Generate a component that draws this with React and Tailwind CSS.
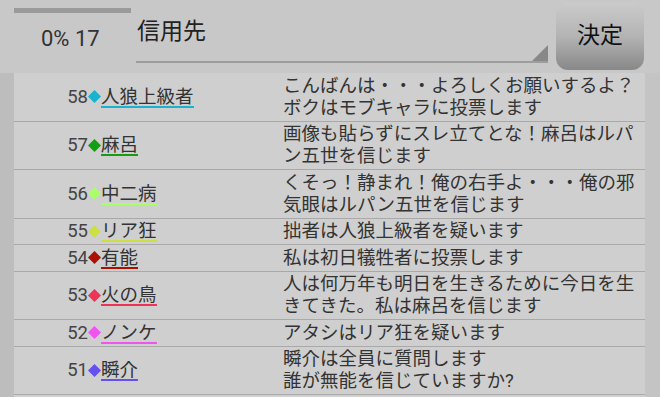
const rows = [
  { no: 58, name: '人狼上級者', color: '#1ab2cc', text: 'こんばんは・・・よろしくお願いするよ？ボクはモブキャラに投票します' },
  { no: 57, name: '麻呂', color: '#12a012', text: '画像も貼らずにスレ立てとな！麻呂はルパン五世を信じます' },
  { no: 56, name: '中二病', color: '#a8ff66', text: 'くそっ！静まれ！俺の右手よ・・・俺の邪気眼はルパン五世を信じます' },
  { no: 55, name: 'リア狂', color: '#cce044', text: '拙者は人狼上級者を疑います' },
  { no: 54, name: '有能', color: '#aa1100', text: '私は初日犠牲者に投票します' },
  { no: 53, name: '火の鳥', color: '#ee3358', text: '人は何万年も明日を生きるために今日を生きてきた。私は麻呂を信じます' },
  { no: 52, name: 'ノンケ', color: '#ee55ee', text: 'アタシはリア狂を疑います' },
  { no: 51, name: '瞬介', color: '#6650ee', text: '瞬介は全員に質問します\n誰が無能を信じていますか?' },
]

const font = { fontFamily: 'Roboto, "Noto Sans CJK JP", sans-serif' }

function Row({ no, name, color, text }) {
  return (
    <div className="flex items-center border-b border-[#a9a9a9] pb-[2px] pt-[1.5px]">
      <div className="flex w-[269px] shrink-0 items-center">
        <span className="w-[74px] text-right text-[18.5px] leading-[22px] text-[#444]">{no}</span>
        <svg width="13" height="13" viewBox="0 0 12 12" className="shrink-0">
          <polygon points="6,0 12,6 6,12 0,6" fill={color} />
        </svg>
        <span
          className="mt-[2px] border-b-2 text-[18.5px] leading-[18px] text-[#333]"
          style={{ borderColor: color }}
        >
          {name}
        </span>
      </div>
      <div className="min-h-[22px] w-[360px] whitespace-pre-line text-[18.5px] leading-[22px] text-[#333]">{text}</div>
    </div>
  )
}

export default function App() {
  return (
    <div className="flex h-[397px] w-[660px] flex-col overflow-hidden bg-[#c8c8c8]" style={font}>
      <div className="flex h-[73px] shrink-0">
        <div className="ml-[14px] flex w-[117px] flex-col pt-[8px]">
          <div className="h-[5px] bg-[#9a9a9a]" />
          <div className="mt-[13px] pl-[27px] text-[22px] leading-[26px] text-[#333]">0% 17</div>
        </div>
        <div className="relative ml-[5px] mt-[14px] h-[49px] w-[412px] border-b-2 border-[#9d9d9d]">
          <span className="absolute left-[1px] top-[4px] text-[23px] leading-[28px] text-[#222]">信用先</span>
          <svg width="16" height="16" viewBox="0 0 16 16" className="absolute bottom-0 right-0">
            <polygon points="16,0 16,16 0,16" fill="#888" />
          </svg>
        </div>
        <div className="ml-[8px] mt-[2px] flex h-[68px] w-[88px] items-center justify-center rounded-[12px] bg-gradient-to-b from-[#cbcbcb] via-[#b4b4b4] to-[#888] text-[23px] text-[#111]">
          決定
        </div>
      </div>
      <div className="flex min-h-0 flex-1">
        <div className="w-[14px] shrink-0 bg-[#bdbdbd]" />
        <div className="w-[631px] shrink-0 bg-[#cfcfcf]">
          {rows.map((r) => (
            <Row key={r.no} {...r} />
          ))}
        </div>
        <div className="flex-1 bg-[#c4c4c4]" />
      </div>
    </div>
  )
}
